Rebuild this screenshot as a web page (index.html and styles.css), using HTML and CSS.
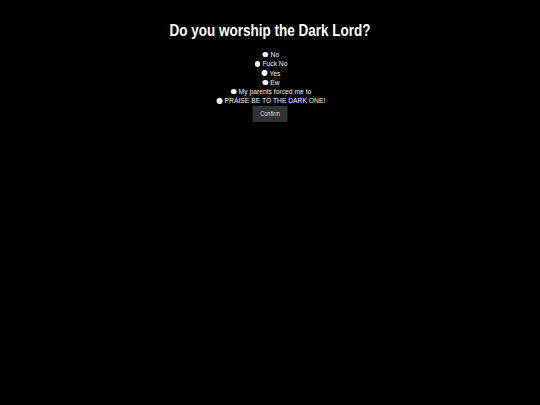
FILE: index.html
```html
<!DOCTYPE html>
<html lang="en">
<head>
<meta charset="utf-8">
<title>Do you worship the Dark Lord?</title>
<link rel="stylesheet" href="styles.css">
</head>
<body>
<div class="screen">
  <h1 class="title">Do you worship the Dark Lord?</h1>
  <form class="poll">
    <div class="options">
      <label class="option"><input class="radio" type="radio" name="answer"><span>No</span></label>
      <label class="option"><input class="radio" type="radio" name="answer"><span>Fuck No</span></label>
      <label class="option"><input class="radio" type="radio" name="answer"><span>Yes</span></label>
      <label class="option"><input class="radio" type="radio" name="answer"><span>Ew</span></label>
      <label class="option"><input class="radio" type="radio" name="answer"><span>My parents forced me to</span></label>
      <label class="option"><input class="radio" type="radio" name="answer"><span>PRAISE BE TO THE DARK ONE!</span></label>
    </div>
    <button class="confirm" type="button">Confirm</button>
  </form>
</div>
</body>
</html>
```

FILE: styles.css
```css
html, body {
  margin: 0;
  padding: 0;
  background: #000;
}

/* The reference is horizontally compressed (narrow rendering),
   so the whole centred column is squeezed around its centre. */
.screen {
  width: 540px;
  transform: scaleX(0.8333);
  transform-origin: 50% 0;
  color: #fff;
  font-family: "Liberation Sans", Arial, sans-serif;
  text-align: center;
  padding-top: 21.3px;
}

.title {
  margin: 0;
  font-size: 16.2px;
  line-height: 18.7px;
  font-weight: bold;
}

.poll {
  margin: 10.1px 0 0;
  display: flex;
  flex-direction: column;
  align-items: center;
}

.options {
  display: flex;
  flex-direction: column;
  align-items: center;
}

.option {
  display: flex;
  align-items: center;
  height: 9.21px;
  font-size: 8.1px;
  line-height: 9.2px;
  color: #f4f4f4;
}

.radio {
  appearance: none;
  -webkit-appearance: none;
  width: 6.7px;
  height: 5.6px;
  margin: 0 2.6px 0 2.6px;
  border-radius: 50%;
  background: #fff;
  border: none;
}

.confirm {
  margin-top: 0.5px;
  width: 42px;
  height: 15.7px;
  padding: 0;
  border: none;
  background: #333;
  color: #ddd;
  font-family: "Liberation Sans", Arial, sans-serif;
  font-size: 6.75px;
  line-height: 8px;
}
```
